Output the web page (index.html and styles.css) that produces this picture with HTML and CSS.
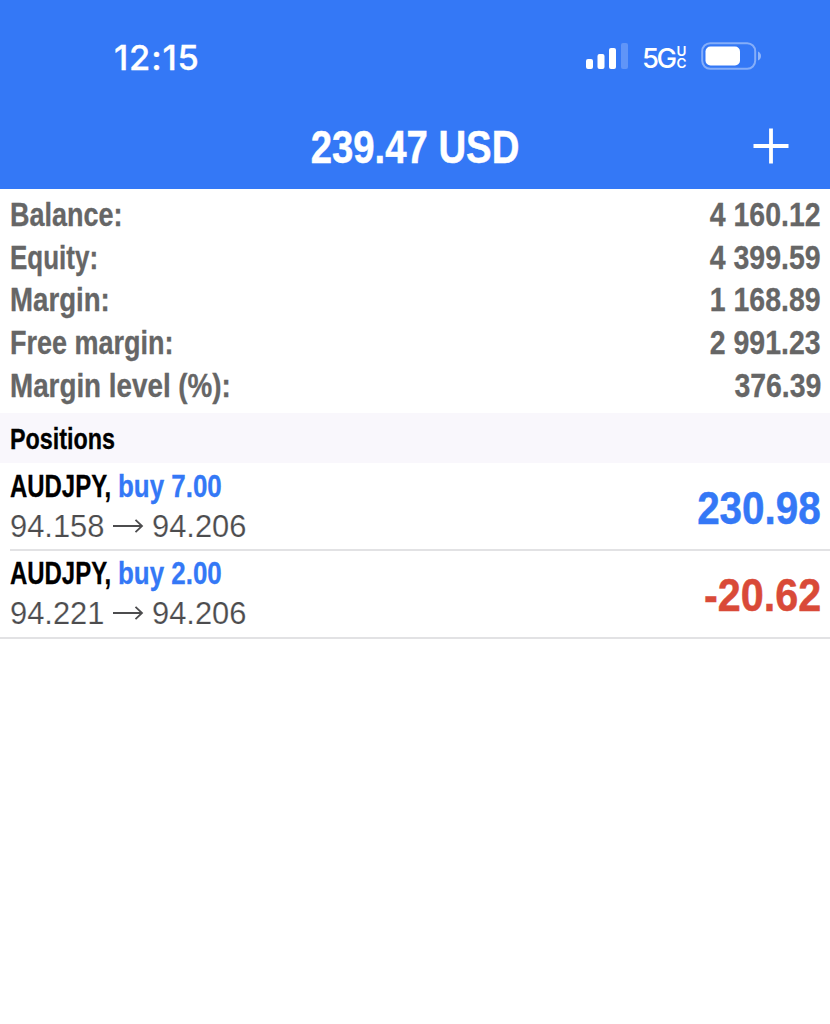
FILE: index.html
```html
<!DOCTYPE html>
<html lang="en">
<head>
<meta charset="utf-8">
<title>Trade</title>
<link rel="stylesheet" href="styles.css">
</head>
<body>
<header class="header">
  <div class="status">
    <span class="time">12:15</span>
    <div class="indicators">
      <svg class="signal" width="44" height="28" viewBox="0 0 44 28" fill="#fff">
        <rect x="1" y="17" width="7" height="10" rx="2"/>
        <rect x="12.500" y="12" width="7" height="15" rx="2"/>
        <rect x="24" y="6" width="7" height="21" rx="2"/>
        <rect x="36" y="1" width="7" height="26" rx="2" opacity=".22"/>
      </svg>
      <span class="network">5G</span>
      <span class="uc"><span>U</span><span>C</span></span>
      <svg class="battery" width="62" height="28" viewBox="0 0 62 28">
        <rect x="1.200" y="1.200" width="53" height="25.600" rx="8" fill="none" stroke="#fff" stroke-opacity=".4" stroke-width="2"/>
        <rect x="4.500" y="4.500" width="34.500" height="19" rx="5" fill="#fff"/>
        <path d="M57 9.500Q60 11 60 14T57 18.500Z" fill="#fff" fill-opacity=".45"/>
      </svg>
    </div>
  </div>
  <div class="navbar">
    <h1 class="total">239.47 USD</h1>
    <svg class="add" width="36" height="36" viewBox="0 0 36 36" stroke="#fff" stroke-width="3.800"><path d="M18 .5V35.500M.5 18H35.500"/></svg>
  </div>
</header>
<main>
  <section class="summary">
    <div class="line"><span class="label balance">Balance:</span><span class="value">4 160.12</span></div>
    <div class="line"><span class="label equity">Equity:</span><span class="value">4 399.59</span></div>
    <div class="line"><span class="label margin">Margin:</span><span class="value">1 168.89</span></div>
    <div class="line"><span class="label free">Free margin:</span><span class="value">2 991.23</span></div>
    <div class="line"><span class="label level">Margin level (%):</span><span class="value">376.39</span></div>
  </section>
  <h2 class="section-title"><span>Positions</span></h2>
  <section class="positions">
    <article class="position">
      <div class="details">
        <div class="order"><span class="symbol">AUDJPY,</span><span class="side">buy 7.00</span></div>
        <div class="prices"><span class="price">94.158</span><svg class="arrow" width="32" height="16" viewBox="0 0 32 16"><path d="M1 8H30M23.500 1.800L30 8L23.500 14.200"/></svg><span class="price">94.206</span></div>
      </div>
      <span class="profit gain">230.98</span>
    </article>
    <article class="position">
      <div class="details">
        <div class="order"><span class="symbol">AUDJPY,</span><span class="side">buy 2.00</span></div>
        <div class="prices"><span class="price">94.221</span><svg class="arrow" width="32" height="16" viewBox="0 0 32 16"><path d="M1 8H30M23.500 1.800L30 8L23.500 14.200"/></svg><span class="price">94.206</span></div>
      </div>
      <span class="profit loss">-20.62</span>
    </article>
  </section>
</main>
</body>
</html>
```
FILE: styles.css
```css
* { box-sizing: border-box; }
body {
  margin: 0;
  min-height: 1024px;
  background: #fff;
  font-family: "Liberation Sans", Arial, sans-serif;
  overflow-x: hidden;
}
h1, h2 { margin: 0; }
svg { display: block; flex: none; }
.header { height: 189px; background: #3478f6; color: #fff; }
.status {
  height: 105px;
  padding: 37px 67px 28px 114px;
  display: flex;
  justify-content: space-between;
  align-items: center;
  font-family: Inter, sans-serif;
}
.time { margin-top: 2px; font-size: 34.500px; font-weight: 500; line-height: 40px; letter-spacing: 0.8px; -webkit-text-stroke: .3px #fff; }
.indicators { display: flex; align-items: center; height: 40px; }
.signal { margin-top: -2px; }
.network { width: 33px; margin-left: 13px; font-size: 27.500px; font-weight: 500; line-height: 40px; letter-spacing: -2.5px; margin-top: 2px; }
.uc { display: flex; flex-direction: column; align-items: center; width: 11px; margin: 0 14px 0 1px; font-size: 13.500px; font-weight: 600; line-height: 12px; }
.battery { margin-top: -2px; }
.navbar {
  height: 84px;
  padding: 0 41px;
  display: grid;
  grid-template-columns: 36px 1fr 36px;
  align-items: center;
}
.total { grid-column: 2; text-align: center; font-size: 47px; line-height: 84px; font-weight: 700; white-space: nowrap; -webkit-text-stroke: .5px currentColor; transform: scaleX(.815); }
.add { margin-top: -3px; }
.summary { padding: 5px 9px 6px 9.500px; color: #666; }
.line { display: flex; justify-content: space-between; height: 42.700px; line-height: 42.700px; font-size: 32.500px; font-weight: 700; white-space: nowrap; }
.label { -webkit-text-stroke: .3px currentColor; transform: scaleX(.83); transform-origin: left; }
.equity { transform: scaleX(.8); }
.margin { transform: scaleX(.85); }
.level { transform: scaleX(.855); }
.value { -webkit-text-stroke: .3px currentColor; transform: scaleX(.875); transform-origin: right; }
.section-title { height: 50px; padding-left: 9.500px; background: #f9f7fc; color: #000; font-size: 29px; line-height: 52px; }
.section-title span { display: inline-block; -webkit-text-stroke: .3px currentColor; transform: scaleX(.805); transform-origin: left; }
.positions { border-bottom: 2px solid #e2e2e4; }
.position { display: flex; justify-content: space-between; height: 87px; padding-right: 9px; margin-left: 10px; }
.position + .position { border-top: 2px solid #e2e2e4; margin-top: -1px; height: 88px; }
.details { padding-top: 3px; }
.position + .position .details { padding-top: 2px; }
.order { display: flex; height: 40px; line-height: 40px; font-size: 30.500px; font-weight: 700; white-space: nowrap; -webkit-text-stroke: .3px currentColor; }
.symbol { width: 108px; color: #000; transform: scaleX(.785); transform-origin: left; }
.side { color: #3478f6; transform: scaleX(.85); transform-origin: left; }
.prices { display: flex; align-items: center; height: 41px; color: #4c4c4e; font-size: 31.500px; line-height: 41px; }
.price { width: 95px; -webkit-text-stroke: .2px #fff; transform: scaleX(.98); transform-origin: left; }
.arrow { margin: -1px 8px 0 7px; fill: none; stroke: #4c4c4e; stroke-width: 1.800; }
.profit { font-size: 47px; font-weight: 700; line-height: 90px; white-space: nowrap; -webkit-text-stroke: .5px currentColor; transform: scaleX(.86); transform-origin: right; }
.position + .position .profit { line-height: 87px; }
.gain { color: #3478f6; }
.loss { color: #d94a38; transform: scaleX(.88); }
```
